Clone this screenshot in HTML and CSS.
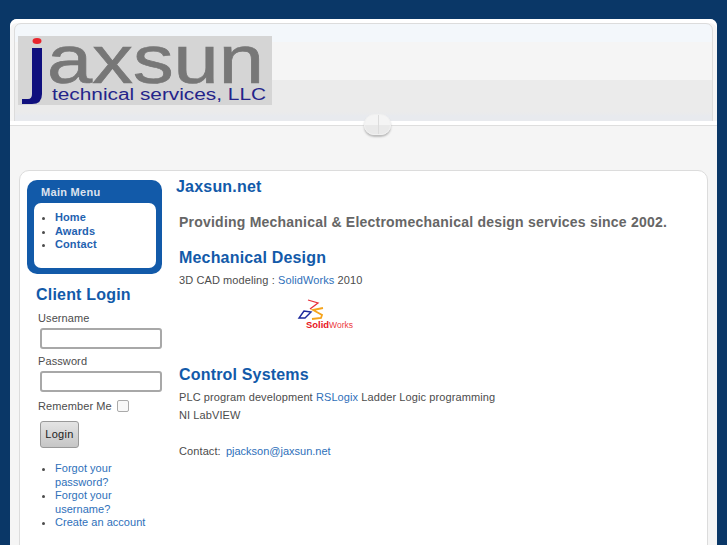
FILE: index.html
```html
<!DOCTYPE html>
<html lang="en">
<head>
<meta charset="utf-8">
<title>Jaxsun.net</title>
<link rel="stylesheet" href="styles.css">
</head>
<body>
<div class="page">
  <header class="header">
    <svg class="logo" width="254" height="69" viewBox="0 0 254 69">
      <rect width="254" height="69" fill="#d5d5d5"/>
      <path class="logo-j" d="M14 12 H24 V58 Q24 68 14 68 H4 V63 H10 Q14 63 14 58 Z"/>
      <ellipse cx="19" cy="5" rx="4.500" ry="3" fill="#e8242c"/>
      <text class="logo-main" x="29" y="47" font-size="68" textLength="217" lengthAdjust="spacingAndGlyphs">axsun</text>
      <text class="logo-sub" x="34" y="64" font-size="16" textLength="214" lengthAdjust="spacingAndGlyphs">technical services, LLC</text>
    </svg>
  </header>
  <div class="handle"></div>
  <div class="card">
    <aside class="sidebar">
      <nav class="menu">
        <h3 class="menu-title">Main Menu</h3>
        <ul class="menu-list">
          <li><a href="#">Home</a></li>
          <li><a href="#">Awards</a></li>
          <li><a href="#">Contact</a></li>
        </ul>
      </nav>
      <h3 class="login-title">Client Login</h3>
      <form class="login">
        <label class="field-label">Username</label>
        <input class="field" type="text">
        <label class="field-label">Password</label>
        <input class="field" type="password">
        <label class="remember">Remember Me <span class="check"></span></label>
        <button class="btn" type="button">Login</button>
      </form>
      <ul class="login-links">
        <li><a href="#">Forgot your password?</a></li>
        <li><a href="#">Forgot your username?</a></li>
        <li><a href="#">Create an account</a></li>
      </ul>
    </aside>
    <main class="main">
      <h2 class="site-title">Jaxsun.net</h2>
      <div class="body">
        <p class="lead">Providing Mechanical &amp; Electromechanical design services since 2002.</p>
        <h2 class="section">Mechanical Design</h2>
        <p class="line">3D CAD modeling : <a href="#">SolidWorks</a> 2010</p>
        <svg class="sw" width="58" height="34" viewBox="0 0 58 34">
          <path d="M11 1 L21 4 L13 10" fill="none" stroke="#e8303a" stroke-width="1.300"/>
          <path d="M7 12 L2 19 H8 L14 13 Z" fill="none" stroke="#1c2a9c" stroke-width="1.400"/>
          <path d="M26 9 L16 11 L25 16 L24 19 L15 20" fill="none" stroke="#f5a41c" stroke-width="1.800"/>
          <text class="sw-a" x="9" y="29" font-size="8.500" textLength="23" lengthAdjust="spacingAndGlyphs">Solid</text>
          <text class="sw-b" x="32" y="29" font-size="8.500" textLength="24" lengthAdjust="spacingAndGlyphs">Works</text>
        </svg>
        <h2 class="section section-b">Control Systems</h2>
        <p class="line">PLC program development <a href="#">RSLogix</a> Ladder Logic programming</p>
        <p class="line line-gap">NI LabVIEW</p>
        <p class="line line-contact">Contact: <a class="mail" href="#">pjackson@jaxsun.net</a></p>
      </div>
    </main>
  </div>
</div>
</body>
</html>
```
FILE: styles.css
```css
* { box-sizing: border-box; }
html, body { margin: 0; height: 545px; overflow: hidden; }
body { background: #0a3767; font-family: "Liberation Sans", Arial, sans-serif; font-size: 11px; color: #4c4c4c; letter-spacing: 0.1px; }
a { color: #2e70ba; text-decoration: none; }
h2, h3, p, ul { margin: 0; padding: 0; }

.page { margin: 19px 10px 0; height: 526px; background: #f5f5f5; border-radius: 7px 7px 0 0; position: relative; padding-top: 4px; box-shadow: inset 0 4px 0 #fff; }
.header { margin: 0 4px; height: 99px; padding: 12px 0 0 3px; border: 1px solid #dcdcdc; border-radius: 7px 7px 0 0; background: linear-gradient(#f3f7fb 0, #f3f7fb 18px, #f5f5f5 18px, #f5f5f5 56px, #ebebeb 56px, #ebebeb 88px, #e8eaee 92px); position: relative; }
.header::after { content: ""; position: absolute; left: -5px; right: -5px; top: 97px; height: 4px; background: #fff; border-bottom: 1px solid #dedede; }
.logo { display: block; }
.logo-j { fill: #10107e; }
.logo-main { font-family: "Liberation Sans", sans-serif; fill: #777; stroke: #777; stroke-width: 0.7; letter-spacing: 0; }
.logo-sub { font-family: "Liberation Sans", sans-serif; fill: #24248a; letter-spacing: 0; }

.handle { position: absolute; left: 354px; top: 95px; width: 27px; height: 21px; border-radius: 10px; background: linear-gradient(to right, transparent 13px, #dcdcdc 13px, #dcdcdc 14px, transparent 14px), linear-gradient(#f4f4f4 0, #f4f4f4 50%, #e9e9e9 50%, #e9e9e9 100%); border: 1px solid #f0f0f0; box-shadow: 0 2px 2px #bbb; z-index: 2; }

.card { position: absolute; left: 9px; right: 9px; top: 151px; bottom: -20px; background: #fff; border: 1px solid #dcdcdc; border-radius: 10px 10px 0 0; display: flex; padding: 9px 0 0 7px; }
.sidebar { width: 135px; flex: none; }
.menu { height: 94px; background: #125aa9; border-radius: 10px; padding: 6px 6px 6px 7px; }
.menu-title { font-size: 11px; line-height: 13px; font-weight: bold; color: #dde3ee; padding-left: 7px; margin-bottom: 4px; letter-spacing: 0.3px; }
.menu-list { height: 65px; background: #fff; border-radius: 7px; padding: 8px 0 0 21px; }
.menu-list li { line-height: 13.500px; }
.menu-list a { font-weight: bold; color: #1f62b0; }
.login-title { font-size: 16px; line-height: 20px; color: #125aa9; margin: 11px 0 0 9px; letter-spacing: 0.2px; }
.login { display: flex; flex-direction: column; align-items: flex-start; padding: 6px 0 0 11px; }
.field-label { line-height: 14px; }
.field { width: 122px; height: 21px; margin: 3px 0 5px 2px; border: 2px solid #a8a8a8; border-radius: 3px; background: #fff; padding: 0; }
.remember { display: flex; align-items: center; gap: 5px; line-height: 14px; margin-top: 2px; }
.check { width: 12px; height: 12px; border: 1px solid #aaa; border-radius: 2px; background: #f8f8f8; }
.btn { margin: 8px 0 0 2px; width: 39px; height: 27px; border: 1px solid #999; border-radius: 3px; background: linear-gradient(#e4e4e4, #c6c6c6); font: 11px "Liberation Sans", sans-serif; letter-spacing: 0.3px; color: #222; padding: 0 0 2px; }
.login-links { margin-top: 14px; padding-left: 28px; width: 125px; letter-spacing: 0.03px; }
.login-links li { line-height: 13.500px; }

.main { flex: 1; padding-left: 14px; margin-top: -3px; }
.site-title { font-size: 16px; line-height: 20px; color: #125aa9; letter-spacing: 0.2px; }
.body { padding: 15px 0 0 3px; }
.lead { font-size: 14px; line-height: 20px; font-weight: bold; color: #666; letter-spacing: 0.22px; }
.section { font-size: 16px; line-height: 20px; color: #125aa9; margin-top: 16px; letter-spacing: 0.18px; }
.section-b { margin-top: 32px; }
.line { line-height: 18px; margin-top: 3px; }
.line-gap { margin-top: 0; }
.line-contact { margin-top: 18px; }
.mail { margin-left: 2px; letter-spacing: 0; }
.sw { display: block; margin: 10px 0 0 118px; }
.sw-a { font-family: "Liberation Sans", sans-serif; font-weight: bold; fill: #e8141c; letter-spacing: 0; }
.sw-b { font-family: "Liberation Sans", sans-serif; fill: #ec3a40; letter-spacing: 0; }
```
